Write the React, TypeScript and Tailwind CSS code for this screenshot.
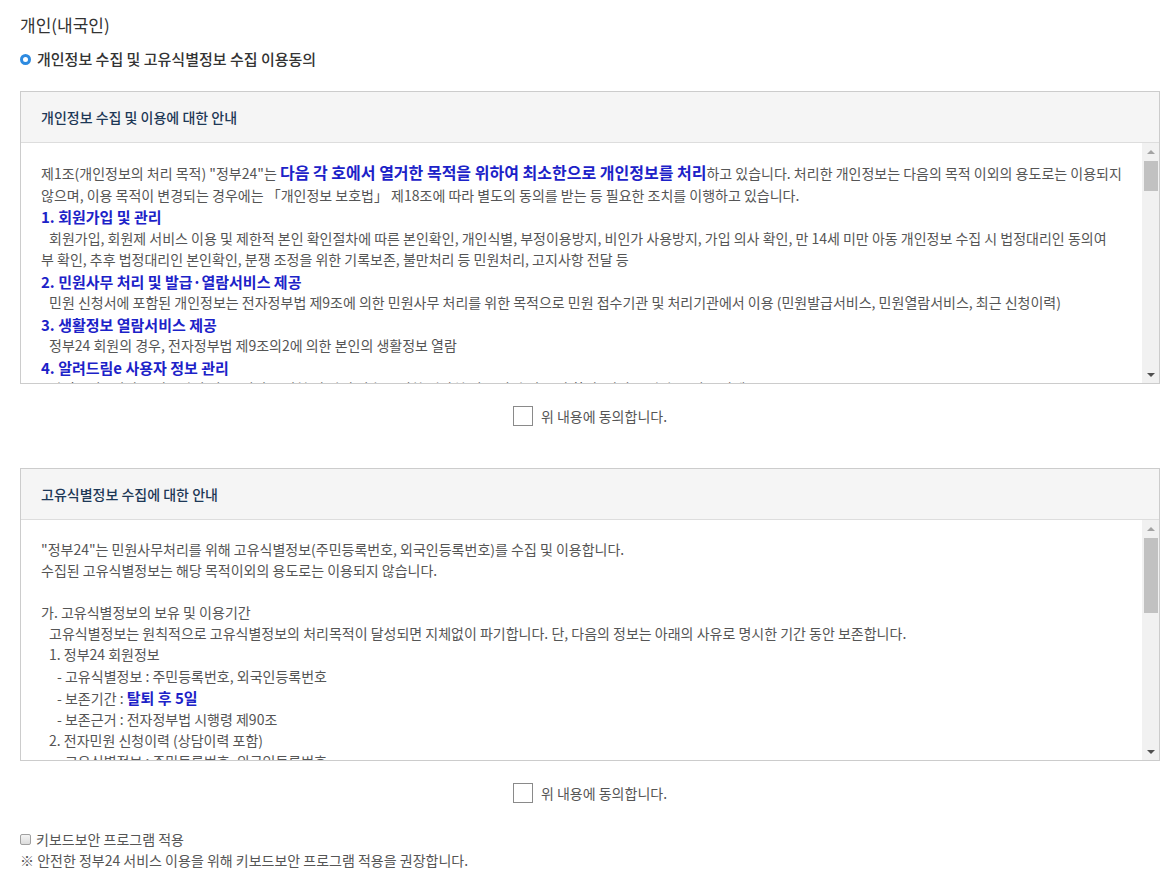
import type { ReactNode } from "react";

const FONT = "font-['Malgun_Gothic','Noto_Sans_CJK_KR','Noto_Sans',sans-serif]";

function ScrollBar({ thumbHeight }: { thumbHeight: number }) {
  return (
    <div className="flex w-[17px] shrink-0 flex-col bg-[#f1f1f1]">
      <div className="flex h-[17px] items-center justify-center">
        <div className="h-0 w-0 border-x-[4px] border-b-[4px] border-x-transparent border-b-[#a3a3a3]" />
      </div>
      <div
        className="mx-auto mt-[1px] w-[14px] bg-[#c1c1c1]"
        style={{ height: thumbHeight }}
      />
      <div className="flex-1" />
      <div className="flex h-[17px] items-center justify-center">
        <div className="h-0 w-0 border-x-[4px] border-t-[4px] border-x-transparent border-t-[#505050]" />
      </div>
    </div>
  );
}

function InfoBox({
  title,
  thumbHeight,
  children,
}: {
  title: string;
  thumbHeight: number;
  children: ReactNode;
}) {
  return (
    <div className="border border-[#cccccc]">
      <div className="flex h-[51px] items-center border-b border-[#dddddd] bg-[#f5f5f5] px-5">
        <h3 className="text-[14px] font-medium text-[#1d3856]">{title}</h3>
      </div>
      <div className="flex h-[240px]">
        <div className="flex-1 overflow-hidden pl-5 pt-[19px] text-[14px] text-[#555]">
          {children}
        </div>
        <ScrollBar thumbHeight={thumbHeight} />
      </div>
    </div>
  );
}

function AgreeRow() {
  return (
    <label className="mt-[22px] flex h-5 items-center justify-center gap-2 text-[14px] text-[#555]">
      <span className="h-5 w-5 border border-[#8a8a8a] bg-white" />
      위 내용에 동의합니다.
    </label>
  );
}

const Blue = ({ children, big }: { children: ReactNode; big?: boolean }) => (
  <strong className={`${big ? "text-[16px]" : "text-[15px]"} font-bold text-[#1c22c8]`}>
    {children}
  </strong>
);

const Heading = ({ children }: { children: ReactNode }) => (
  <div className="whitespace-nowrap text-[15px] font-bold text-[#1c22c8]">{children}</div>
);

export default function App() {
  return (
    <div className={`${FONT} bg-white px-5 pt-[14px] pb-4 text-[#333]`}>
      <h2 className="text-[17px] leading-[22px] text-[#333]">개인(내국인)</h2>
      <div className="mt-[13px] flex items-center gap-[6px] leading-5">
        <span className="h-[11px] w-[11px] rounded-full border-[3px] border-[#2d8ae0] bg-white" />
        <span className="text-[15px] font-medium text-[#333]">
          개인정보 수집 및 고유식별정보 수집 이용동의
        </span>
      </div>

      <div className="mt-[22px] w-[1140px]">
        <InfoBox title="개인정보 수집 및 이용에 대한 안내" thumbHeight={30}>
          <div className="leading-[21.5px]">
            <div className="whitespace-nowrap">
              제1조(개인정보의 처리 목적) "정부24"는{" "}
              <Blue big>다음 각 호에서 열거한 목적을 위하여 최소한으로 개인정보를 처리</Blue>하고
              있습니다. 처리한 개인정보는 다음의 목적 이외의 용도로는 이용되지
            </div>
            <div className="whitespace-nowrap">
              않으며, 이용 목적이 변경되는 경우에는 「개인정보 보호법」 제18조에 따라 별도의 동의를
              받는 등 필요한 조치를 이행하고 있습니다.
            </div>
            <Heading>1. 회원가입 및 관리</Heading>
            <div className="whitespace-nowrap pl-2">
              회원가입, 회원제 서비스 이용 및 제한적 본인 확인절차에 따른 본인확인, 개인식별,
              부정이용방지, 비인가 사용방지, 가입 의사 확인, 만 14세 미만 아동 개인정보 수집 시
              법정대리인 동의여
            </div>
            <div className="whitespace-nowrap">
              부 확인, 추후 법정대리인 본인확인, 분쟁 조정을 위한 기록보존, 불만처리 등 민원처리,
              고지사항 전달 등
            </div>
            <Heading>2. 민원사무 처리 및 발급·열람서비스 제공</Heading>
            <div className="whitespace-nowrap pl-2">
              민원 신청서에 포함된 개인정보는 전자정부법 제9조에 의한 민원사무 처리를 위한 목적으로
              민원 접수기관 및 처리기관에서 이용 (민원발급서비스, 민원열람서비스, 최근 신청이력)
            </div>
            <Heading>3. 생활정보 열람서비스 제공</Heading>
            <div className="whitespace-nowrap pl-2">
              정부24 회원의 경우, 전자정부법 제9조의2에 의한 본인의 생활정보 열람
            </div>
            <Heading>4. 알려드림e 사용자 정보 관리</Heading>
            <div className="whitespace-nowrap pl-2">
              알려드림e 서비스 이용자의 경우, 서비스 신청 및 알림 발송을 위한 연락처 정보 관리 및
              본인 확인, 서비스 해지 시 정보 삭제
            </div>
          </div>
        </InfoBox>

        <AgreeRow />

        <div className="mt-[42px]">
          <InfoBox title="고유식별정보 수집에 대한 안내" thumbHeight={75}>
            <div className="leading-[21.1px]">
              <div className="whitespace-nowrap">
                "정부24"는 민원사무처리를 위해 고유식별정보(주민등록번호, 외국인등록번호)를 수집 및
                이용합니다.
              </div>
              <div className="whitespace-nowrap">
                수집된 고유식별정보는 해당 목적이외의 용도로는 이용되지 않습니다.
              </div>
              <div className="h-[21.1px]" />
              <div className="whitespace-nowrap">가. 고유식별정보의 보유 및 이용기간</div>
              <div className="whitespace-nowrap pl-2">
                고유식별정보는 원칙적으로 고유식별정보의 처리목적이 달성되면 지체없이 파기합니다.
                단, 다음의 정보는 아래의 사유로 명시한 기간 동안 보존합니다.
              </div>
              <div className="whitespace-nowrap pl-2">1. 정부24 회원정보</div>
              <div className="whitespace-nowrap pl-4">- 고유식별정보 : 주민등록번호, 외국인등록번호</div>
              <div className="whitespace-nowrap pl-4">
                - 보존기간 : <Blue>탈퇴 후 5일</Blue>
              </div>
              <div className="whitespace-nowrap pl-4">- 보존근거 : 전자정부법 시행령 제90조</div>
              <div className="whitespace-nowrap pl-2">2. 전자민원 신청이력 (상담이력 포함)</div>
              <div className="whitespace-nowrap pl-4">- 고유식별정보 : 주민등록번호, 외국인등록번호</div>
              <div className="whitespace-nowrap pl-4">- 보존기간 : 5년</div>
            </div>
          </InfoBox>
        </div>

        <AgreeRow />
      </div>

      <div className="mt-[26px] text-[14px] leading-[21px] text-[#555]">
        <label className="flex items-center gap-[5px]">
          <span className="h-[11px] w-[11px] rounded-[2px] border border-[#a0a0a0] bg-gradient-to-b from-[#f4f4f4] to-[#dcdcdc]" />
          키보드보안 프로그램 적용
        </label>
        <p>※ 안전한 정부24 서비스 이용을 위해 키보드보안 프로그램 적용을 권장합니다.</p>
      </div>
    </div>
  );
}
